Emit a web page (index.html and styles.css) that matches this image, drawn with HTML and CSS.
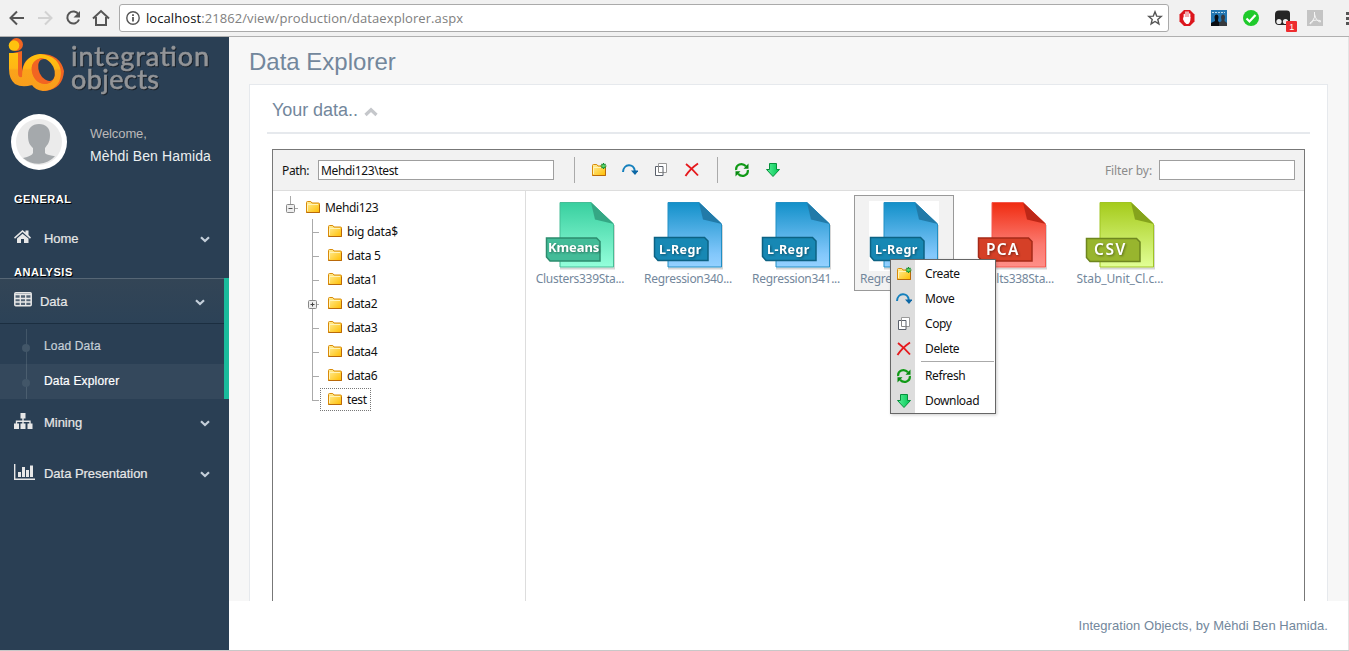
FILE: index.html
```html
<!DOCTYPE html>
<html lang="en">
<head>
<meta charset="utf-8">
<title>Data Explorer</title>
<link rel="stylesheet" href="styles.css">
</head>
<body>
<svg class="defs" width="0" height="0">
  <defs>
    <linearGradient id="gFolder" x1="0" y1="0" x2="1" y2="1"><stop offset="0" stop-color="#fff0a0"/><stop offset="1" stop-color="#ffbd00"/></linearGradient>
    <linearGradient id="gGreen" x1="0" y1="0" x2="0" y2="1"><stop offset="0" stop-color="#38cf9f"/><stop offset="1" stop-color="#94ffdb"/></linearGradient>
    <linearGradient id="gBlue" x1="0" y1="0" x2="0" y2="1"><stop offset="0" stop-color="#1290c9"/><stop offset="0.8" stop-color="#82c7fb"/><stop offset="1" stop-color="#94d1ff"/></linearGradient>
    <linearGradient id="gRed" x1="0" y1="0" x2="0" y2="1"><stop offset="0" stop-color="#f02b10"/><stop offset="0.65" stop-color="#fb7a70"/><stop offset="1" stop-color="#ff8f88"/></linearGradient>
    <linearGradient id="gLime" x1="0" y1="0" x2="0" y2="1"><stop offset="0" stop-color="#a5cb1b"/><stop offset="1" stop-color="#e2ff96"/></linearGradient>
    <linearGradient id="gArrow" x1="0" y1="0" x2="1" y2="0"><stop offset="0" stop-color="#5cf09a"/><stop offset="1" stop-color="#00c653"/></linearGradient>
    <linearGradient id="gLogo" x1="0" y1="0" x2="0" y2="1"><stop offset="0" stop-color="#ffc20e"/><stop offset="0.4" stop-color="#ffb515"/><stop offset="0.45" stop-color="#faa31a"/><stop offset="1" stop-color="#f99d1c"/></linearGradient>
    <symbol id="folder" viewBox="0 0 16 16"><path d="M1.500 13.500v-10q0-1 1-1h3.300l1.200 1.500h6.500q1 0 1 1v8.500z" fill="url(#gFolder)" stroke="#d98a08"/><path d="M1.500 13.500h13V6" fill="none" stroke="#b9690a"/><path d="M2.500 12V5.500h10.500" fill="none" stroke="#fff3b8"/></symbol>
    <symbol id="create" viewBox="0 0 16 16"><use href="#folder" width="16" height="16"/><path d="M12.500 1v6M9.500 4h6M10.500 2l4 4M14.500 2l-4 4" stroke="#118a2c" stroke-width="1.200"/><circle cx="12.500" cy="4" r="1.500" fill="#59d96d"/></symbol>
    <symbol id="move" viewBox="0 0 16 16"><path d="M1 10C1.500 1.500 12 1 12.800 9" fill="none" stroke="#1580bd" stroke-width="2"/><path d="M9 8.500h7.500l-3.500 4.500z" fill="#0c67a5"/></symbol>
    <symbol id="copy" viewBox="0 0 16 16"><path d="M5.500 1.500h8v9h-8z" fill="#fff" stroke="#999"/><path d="M2.500 4.500h7.500v9H2.500z" fill="#fff" stroke="#5a606b"/><path d="M5.500 4v6.500H10" fill="none" stroke="#888"/></symbol>
    <symbol id="delete" viewBox="0 0 16 16"><path d="M2 2Q8 6.500 14 13.500M14 1.500Q6 7 1.500 14" fill="none" stroke="#e5191d" stroke-width="1.900"/></symbol>
    <symbol id="refresh" viewBox="0 0 16 16"><path d="M2.200 8C1.500 2.500 8 0 12 4.200M13.800 8C14.500 13.500 8 16 4 11.800" fill="none" stroke="#109a16" stroke-width="2.200"/><path d="M14.500 1.500v5.300H9.500zM1.500 14.500V9.200h5z" fill="#078a10"/></symbol>
    <symbol id="download" viewBox="0 0 16 16"><path d="M4.500 1.500h7v6h3L8 14.500 1.500 7.500h3z" fill="url(#gArrow)" stroke="#06913c"/></symbol>
    <symbol id="chev" viewBox="0 0 10 7"><path d="M1 1.200l4 3.800 4-3.800" fill="none" stroke="#c4cfda" stroke-width="2.200"/></symbol>
    <symbol id="page" viewBox="0 0 70 70"><path d="M15 67.500h54V24" fill="none" stroke="#777" stroke-opacity=".3" stroke-width="2"/><path d="M15 1.500h31l22.500 21.500v43H15z"/></symbol>
    <symbol id="fold" viewBox="0 0 70 70"><path d="M46 1.500L69 23 50 18.500z"/></symbol>
    <symbol id="tag" viewBox="0 0 70 70"><path d="M1.500 36.500h50l3.500 3.500v19.500H5l-3.500-4z" stroke-width="1.500"/></symbol>
  </defs>
</svg>

<header class="browser">
  <svg class="nav-icons" width="118" height="36" fill="none" stroke="#555" stroke-width="2">
    <path d="M24 18H11M17 11.500L10.500 18l6.500 6.500"/>
    <path d="M38 18h13M45 11.500l6.500 6.500-6.500 6.500" stroke="#d2d2d2"/>
    <path d="M78.500 14.500a6 6 0 1 0 .5 5"/><path d="M80 11v6.500h-6.500z" fill="#555" stroke="none"/>
    <path d="M93 18.500l8-7.500 8 7.500M96 17v8h10v-8"/>
  </svg>
  <div class="address">
    <svg width="14" height="14" fill="none" stroke="#555" stroke-width="1.400"><circle cx="7" cy="7" r="6.200"/><path d="M7 6v4.500M7 3.300v1.600" stroke-width="1.800"/></svg>
    <span class="url"><b>localhost</b>:21862/view/production/dataexplorer.aspx</span>
    <svg class="star" width="16" height="16"><path d="M8 1.800l1.700 4.300 4.600.3-3.500 3 1.100 4.500L8 11.500l-3.900 2.400 1.100-4.500-3.500-3 4.600-.3z" fill="none" stroke="#555" stroke-width="1.400"/></svg>
  </div>
  <svg class="extensions" width="180" height="36">
    <path d="M15 10h6l4.500 4.500v7L21 26h-6l-4.500-4.500v-7z" fill="#dc161d"/>
    <path d="M15.300 18v-3.500M17 17v-5M19 17v-5M20.700 18v-4" stroke="#fff" stroke-width="1.300" stroke-linecap="round"/><path d="M14.700 17h6.700v3q-1 4-2.500 4h-1.500q-2-1-3.500-5z" fill="#fff"/>
    <path d="M42 10h16v16H42z" fill="#2377b2"/><path d="M43 12.500h13" stroke="#b8d7ea" stroke-dasharray="2 1"/><path d="M42 26v-3l4-2v-1q-1.500-5 1.500-5.500 3 .5 1.500 5.500v1l2 2v3z" fill="#090d12"/><path d="M50 26v-3l2.500-2v-1q-1.500-5 1.500-5.500 3 .5 1.500 5.500v1l2.500 2v3z" fill="#373a3e"/>
    <circle cx="82" cy="18" r="8" fill="#1fca2b"/><path d="M77.500 18.500l3 3 6-6.500" fill="none" stroke="#fff" stroke-width="2.200"/>
    <path d="M110 10.500h8q3 0 3 3V25h-11q-4 0-4-4v-6.500q0-4 4-4z" fill="#252525"/><circle cx="110" cy="21.500" r="2.600" fill="#eee"/><circle cx="116.500" cy="21.500" r="2.600" fill="#eee"/>
    <rect x="117" y="21" width="11" height="11" rx="1" fill="#ee2c2f"/><text x="120.300" y="30" fill="#fff" font-size="9" font-family="Liberation Sans">1</text>
    <path d="M138 10h16v16h-16z" fill="#c4c4c4"/><path d="M145.500 12q1.500 5-3 11-2 2-1.500 0 3-4 10-2.500 2 1 0 1.500-4-1-5.500-8z" fill="none" stroke="#f4f4f4"/>
    <path d="M177 12h3v3h-3zM177 17h3v3h-3zM177 22h3v3h-3z" fill="#555"/>
  </svg>
</header>

<div class="app">
  <aside class="sidebar">
    <svg class="logo" width="229" height="60">
      <path d="M13 16l9-2v20q2-15 19-17 19 0 23 17-1 18-19 20-8-2-11-6-10 1-14-5-4-4-4-14z" fill="#f26522"/>
      <circle cx="16.500" cy="7.500" r="6.500" fill="#f26522"/><circle cx="14" cy="8.500" r="5.300" fill="#ffc20e"/>
      <path fill-rule="evenodd" d="M9 16h9v20q0 5 4 4 0-21 18-23 20 2 21 19-1 17-18 18-8-1-11-6-10 3-17-1-6-5-6-15zM41 21q-11 3-9 14 3 12 14 12 10-2 8-13-3-12-13-13z" fill="url(#gLogo)"/>
      <path d="M41 21q-11 3-9 14 3 12 14 12 10-2 8-13-3-12-13-13z" fill="#f26522"/><ellipse cx="46.500" cy="33" rx="7.500" ry="11.500" transform="rotate(-25 46.500 33)" fill="#2a3f54"/>
      <text x="71" y="28.500" textLength="138">integration</text><text x="71" y="52" textLength="88">objects</text>
    </svg>
    <div class="profile">
      <svg width="56" height="56"><circle cx="28" cy="28" r="28" fill="#fff"/><circle cx="28" cy="28" r="23" fill="#ebebeb"/><path d="M28 10c7 0 11 4 11 11 0 8-3 10-5 13v5q1 2 10 3.300A23 23 0 0 1 12 44q9-2 10-5v-5c-3-3-5-5-5-13 0-7 4-11 11-11z" fill="#a5a9ac"/></svg>
      <div><p class="welcome">Welcome,</p><p class="name">Mèhdi Ben Hamida</p></div>
    </div>
    <h3 class="group">GENERAL</h3>
    <a class="item home"><svg width="20" height="18" fill="#e7e7e7"><path d="M0 8.500L8.500 1l3 2.500V1.500h3V6l2.500 2.500-1 1.200L8.500 3 1 9.700z"/><path d="M3 9.500l5.500-4.800L14.500 9.500V14h-4.500v-4H7v4H3z"/></svg><span>Home</span><svg class="chev" width="10" height="7"><use href="#chev"/></svg></a>
    <h3 class="group analysis">ANALYSIS</h3>
    <section class="active">
      <a class="item data"><svg width="18" height="15"><rect x=".8" y=".8" width="16.400" height="13" rx="1" fill="#536475" stroke="#e7e7e7" stroke-width="1.500"/><path d="M1 2.500h16M1 6.500h16M1 10h16M6.300 2v12M11.700 2v12" stroke="#e7e7e7" stroke-width="1.300"/></svg><span>Data</span><svg class="chev" width="10" height="7"><use href="#chev"/></svg></a>
      <div class="sub"><a>Load Data</a><a class="current">Data Explorer</a></div>
    </section>
    <a class="item mining"><svg width="20" height="18"><path d="M6.500 0h5v5.500h-5zM0 10.500h5V16H0zM6.500 10.500h5V16h-5zM13.500 10.500h5V16h-5z" fill="#e7e7e7"/><path d="M9 5v6M2.500 11V8.200h13.500V11" fill="none" stroke="#e7e7e7" stroke-width="1.400"/></svg><span>Mining</span><svg class="chev" width="10" height="7"><use href="#chev"/></svg></a>
    <a class="item present"><svg width="21" height="18" fill="#e7e7e7"><path d="M0 0h1.400v14.600H21V16H0zM4 8h3v5H4zM8 3h3v10H8zM12 6h3v7h-3zM16 1.500h3V13h-3z"/></svg><span>Data Presentation</span><svg class="chev" width="10" height="7"><use href="#chev"/></svg></a>
  </aside>

  <div class="right">
    <main class="content">
      <h1>Data Explorer</h1>
      <section class="panel">
        <h2><span>Your data..</span><svg width="14" height="10"><path d="M1.500 8L7 2.800 12.500 8" fill="none" stroke="#c5c7cb" stroke-width="3.200"/></svg></h2>
        <div class="manager">
          <div class="toolbar">
            <label>Path:</label><div class="field path">Mehdi123\test</div><i class="sep"></i>
            <div class="tools"><svg><use href="#create"/></svg><svg><use href="#move"/></svg><svg><use href="#copy"/></svg><svg><use href="#delete"/></svg></div><i class="sep second"></i>
            <div class="tools"><svg><use href="#refresh"/></svg><svg><use href="#download"/></svg></div>
            <label class="filter">Filter by:</label><div class="field"></div>
          </div>
          <div class="panes">
            <div class="tree">
              <div class="node root"><svg class="twig" width="20" height="24" fill="none" stroke="#aaa"><path d="M8.500 1v9M13 13.500h3"/><rect x="4.500" y="9.500" width="8" height="8" rx="1" fill="#eee" stroke="#888"/><path d="M6.500 13.500h4" stroke="#555"/></svg><svg class="ico"><use href="#folder"/></svg><span>Mehdi123</span></div>
              <div class="kids">
                <div class="node"><svg class="ico"><use href="#folder"/></svg><span class="wide">big data$</span></div>
                <div class="node"><svg class="ico"><use href="#folder"/></svg><span class="wide">data 5</span></div>
                <div class="node"><svg class="ico"><use href="#folder"/></svg><span>data1</span></div>
                <div class="node"><svg class="plus" width="9" height="9" fill="#eee" stroke="#888"><rect x=".5" y=".5" width="8" height="8" rx="1"/><path d="M2.500 4.500h4M4.500 2.500v4" stroke="#444"/></svg><svg class="ico"><use href="#folder"/></svg><span>data2</span></div>
                <div class="node"><svg class="ico"><use href="#folder"/></svg><span>data3</span></div>
                <div class="node"><svg class="ico"><use href="#folder"/></svg><span>data4</span></div>
                <div class="node"><svg class="ico"><use href="#folder"/></svg><span>data6</span></div>
                <div class="node last"><svg class="ico"><use href="#folder"/></svg><span>test</span></div>
              </div>
            </div>
            <div class="files">
              <div class="file"><svg width="70" height="70"><use href="#page" fill="url(#gGreen)" stroke="#45bd96"/><use href="#fold" fill="#35a784"/><use href="#tag" y=".5" fill="#43bc98" stroke="#2c8c6e"/><text x="28.500" y="50.500" textLength="51" font-size="13">Kmeans</text></svg><span>Clusters339Sta...</span></div>
              <div class="file"><svg width="70" height="70"><use href="#page" fill="url(#gBlue)" stroke="#218fc4"/><use href="#fold" fill="#227aa8"/><use href="#tag" fill="#1788b4" stroke="#0c6283"/><text x="27" y="52.500" textLength="42" font-size="12.500">L-Regr</text></svg><span>Regression340...</span></div>
              <div class="file"><svg width="70" height="70"><use href="#page" fill="url(#gBlue)" stroke="#218fc4"/><use href="#fold" fill="#227aa8"/><use href="#tag" fill="#1788b4" stroke="#0c6283"/><text x="27" y="52.500" textLength="42" font-size="12.500">L-Regr</text></svg><span>Regression341...</span></div>
              <div class="file selected"><svg width="70" height="70"><use href="#page" fill="url(#gBlue)" stroke="#218fc4"/><use href="#fold" fill="#227aa8"/><use href="#tag" fill="#1788b4" stroke="#0c6283"/><text x="27" y="52.500" textLength="42" font-size="12.500">L-Regr</text></svg><span>Regression342...</span></div>
              <div class="file"><svg width="70" height="70"><use href="#page" fill="url(#gRed)" stroke="#f4574c"/><use href="#fold" fill="#bd2717"/><use href="#tag" y=".5" fill="#d54027" stroke="#a52a19"/><text class="short" x="25" y="53.500" textLength="32" font-size="15.500">PCA</text></svg><span>Results338Sta...</span></div>
              <div class="file"><svg width="70" height="70"><use href="#page" fill="url(#gLime)" stroke="#a0c423"/><use href="#fold" fill="#85a31c"/><use href="#tag" y="1" fill="#98b52e" stroke="#6e861f"/><text class="short" x="24.500" y="54" textLength="31" font-size="15.500">CSV</text></svg><span>Stab_Unit_Cl.c...</span></div>
            </div>
          </div>
        </div>
      </section>
    </main>
    <footer>Integration Objects, by Mèhdi Ben Hamida.</footer>
  </div>
</div>

<div class="menu">
  <div><svg><use href="#create"/></svg><span>Create</span></div>
  <div><svg><use href="#move"/></svg><span>Move</span></div>
  <div><svg><use href="#copy"/></svg><span>Copy</span></div>
  <div><svg><use href="#delete"/></svg><span>Delete</span></div>
  <hr>
  <div><svg><use href="#refresh"/></svg><span>Refresh</span></div>
  <div><svg><use href="#download"/></svg><span>Download</span></div>
</div>
</body>
</html>
```

FILE: styles.css
```css
* { box-sizing: border-box; }
body { margin: 0; width: 1349px; height: 651px; overflow: hidden; background: #f7f7f7; font: 13px "Liberation Sans", Arial, sans-serif; color: #73879c; }
svg { display: block; flex: none; }
p, h1, h2, h3 { margin: 0; font-weight: 400; }
.defs { position: absolute; }

.browser { display: flex; height: 37px; background: #f1f1f1; border-bottom: 1px solid #b0b0b0; }
.address { display: flex; align-items: center; width: 1050px; height: 28px; margin: 4px 0 0 1px; padding: 0 5px 0 6px; background: #fff; border: 1px solid #aaa; border-radius: 3px; }
.url { margin-left: 6px; font: 13px "Open Sans", sans-serif; color: #808080; letter-spacing: 0.08px; white-space: nowrap; }
.url b { font-weight: 400; color: #111; }
.star { margin-left: auto; }

.app { display: flex; height: 614px; border-bottom: 1px solid #c8c8c8; }
.sidebar { width: 229px; background: #2a3f54; color: #e7e7e7; }
.logo text { font-family: Lato, sans-serif; font-size: 27px; fill: #939598; stroke: #939598; stroke-width: .6; filter: drop-shadow(1px 1px 0 #1b222a); }
.profile { display: flex; gap: 23px; padding: 17px 0 0 11px; height: 85px; }
.profile p { line-height: 23px; white-space: nowrap; }
.profile div { padding-top: 8px; }
.welcome { color: #bab8b8; font-size: 13px; letter-spacing: -.1px; }
.name { color: #ecf0f1; font-size: 14px; letter-spacing: .12px; }
.group { height: 34px; line-height: 34px; padding-left: 14px; font-size: 11px; font-weight: 700; letter-spacing: .52px; color: #fff; text-shadow: 1px 1px #000; }
.item { display: flex; align-items: center; height: 44px; padding: 0 19px 0 14px; font-size: 13px; -webkit-text-stroke: .2px; }
.item > span { margin-left: 10px; letter-spacing: -.03px; }
.item .chev { margin-left: auto; margin-top: 2px; }
.home { margin-top: 0; }
.analysis { height: 18px; line-height: 18px; margin-top: 3px; }
.active { height: 121px; margin-top: -3px; border-right: 5px solid #1abb9c; }
.data { height: 46px; background: linear-gradient(#334556, #2c4257); border-top: 1px solid #566675; border-bottom: 1px solid #1b2e40; }
.data > span { margin-left: 8px; }
.data svg { margin-top: -3px; }
.sub { height: 75px; padding-top: 5px; background: linear-gradient(#425668, #425668) 26px 5px / 1px 70px no-repeat; }
.sub a { display: flex; align-items: center; height: 35px; padding: 0 0 2px 22px; font-size: 12px; color: #c6d0d8; letter-spacing: .15px; -webkit-text-stroke: .2px; }
.sub a::before { content: ""; width: 8px; height: 8px; margin: 5px 14px 0 0; border-radius: 50%; background: #425668; }
.sub .current { color: #fff; background: rgba(255, 255, 255, .05); }
.mining { margin-top: 1px; }
.present { margin-top: 7px; }
.present > span { margin-left: 9px; }

.right { display: flex; flex-direction: column; width: 1120px; border-right: 1px solid #e4e4e4; }
.content { height: 564px; padding: 0 20px; overflow: hidden; }
h1 { height: 47px; padding-top: 10px; font-size: 24px; line-height: 30px; }
.panel { height: 530px; padding: 0 17px; background: #fff; border: 1px solid #e6e9ed; }
h2 { display: flex; align-items: center; gap: 6px; height: 49px; padding: 3px 5px 0; font-size: 18px; border-bottom: 2px solid #e6e9ed; }
h2 span { letter-spacing: -.05px; }
h2 svg { margin-top: 3px; }
.manager { height: 480px; margin: 15px 5px 0; border: 1px solid #777; font: 12px "Noto Sans", sans-serif; letter-spacing: -.37px; color: #111; }
.toolbar { display: flex; align-items: center; height: 41px; padding: 0 9px; background: #f2f2f2; border-bottom: 1px solid #ddd; }
.field { width: 136px; height: 20px; padding-left: 2px; line-height: 19px; background: #fff; border: 1px solid #9f9f9f; }
.path { width: 236px; margin-left: 9px; }
.sep { width: 1px; height: 26px; margin: 0 16px 0 20px; background: #aaa; }
.second { margin-left: 17px; }
.tools { display: flex; gap: 15px; }
.tools svg, .ico, .menu svg { width: 16px; height: 16px; }
.filter { margin: 0 7px 0 auto; color: #8b8b8b; letter-spacing: -.1px; }
.panes { display: flex; height: 440px; }
.tree { width: 253px; padding: 4px 0 0 9px; border-right: 1px solid #ddd; }
.node { display: flex; align-items: center; height: 24px; }
.node .ico { margin-right: 4px; }
.wide { letter-spacing: -.25px; }
.root .twig { margin-right: 3px; }
.kids { padding-left: 30px; background: linear-gradient(#aaa, #aaa) 30px 0 / 1px 181px no-repeat; }
.kids .node::before { content: ""; width: 7px; height: 1px; margin: 2px 8px 0 0; background: #aaa; }
.kids .node { position: relative; }
.plus { position: absolute; left: -4px; top: 9px; }
.kids .last { width: 59px; }
.last::after { content: ""; position: absolute; inset: 1px 0 0 8px; border: 1px dotted #777; }
.files { display: flex; gap: 8px; padding: 4px; }
.file { display: flex; flex-direction: column; align-items: center; width: 100px; height: 96px; padding-top: 5px; border: 1px solid transparent; color: #73879c; }
.file > svg { background: #fff; }
.file text { fill: #fff; font-family: "Noto Sans"; font-weight: 700; text-anchor: middle; filter: drop-shadow(1px 1px 1px #0006); }
.file .short { font-weight: 600; }
.file > span { line-height: 16px; letter-spacing: -.3px; white-space: nowrap; }
.file:last-child > span { letter-spacing: -.1px; }
.selected { background: #f2f2f2; border-color: #999; }
footer { height: 49px; padding-right: 20px; line-height: 49px; text-align: right; background: #fff; letter-spacing: .04px; }

.menu { position: absolute; left: 890px; top: 259px; width: 106px; height: 155px; padding: 1px; border: 1px solid #666; background: linear-gradient(90deg, #ddd 24px, #fff 24px); box-shadow: 1px 1px 3px #0003; font: 12px "Noto Sans", sans-serif; letter-spacing: -.37px; color: #111; }
.menu div { display: flex; align-items: center; gap: 13px; height: 25px; padding-left: 4px; }
.menu hr { height: 1px; margin: 0 0 1px 29px; border: 0; background: #aaa; }
```
